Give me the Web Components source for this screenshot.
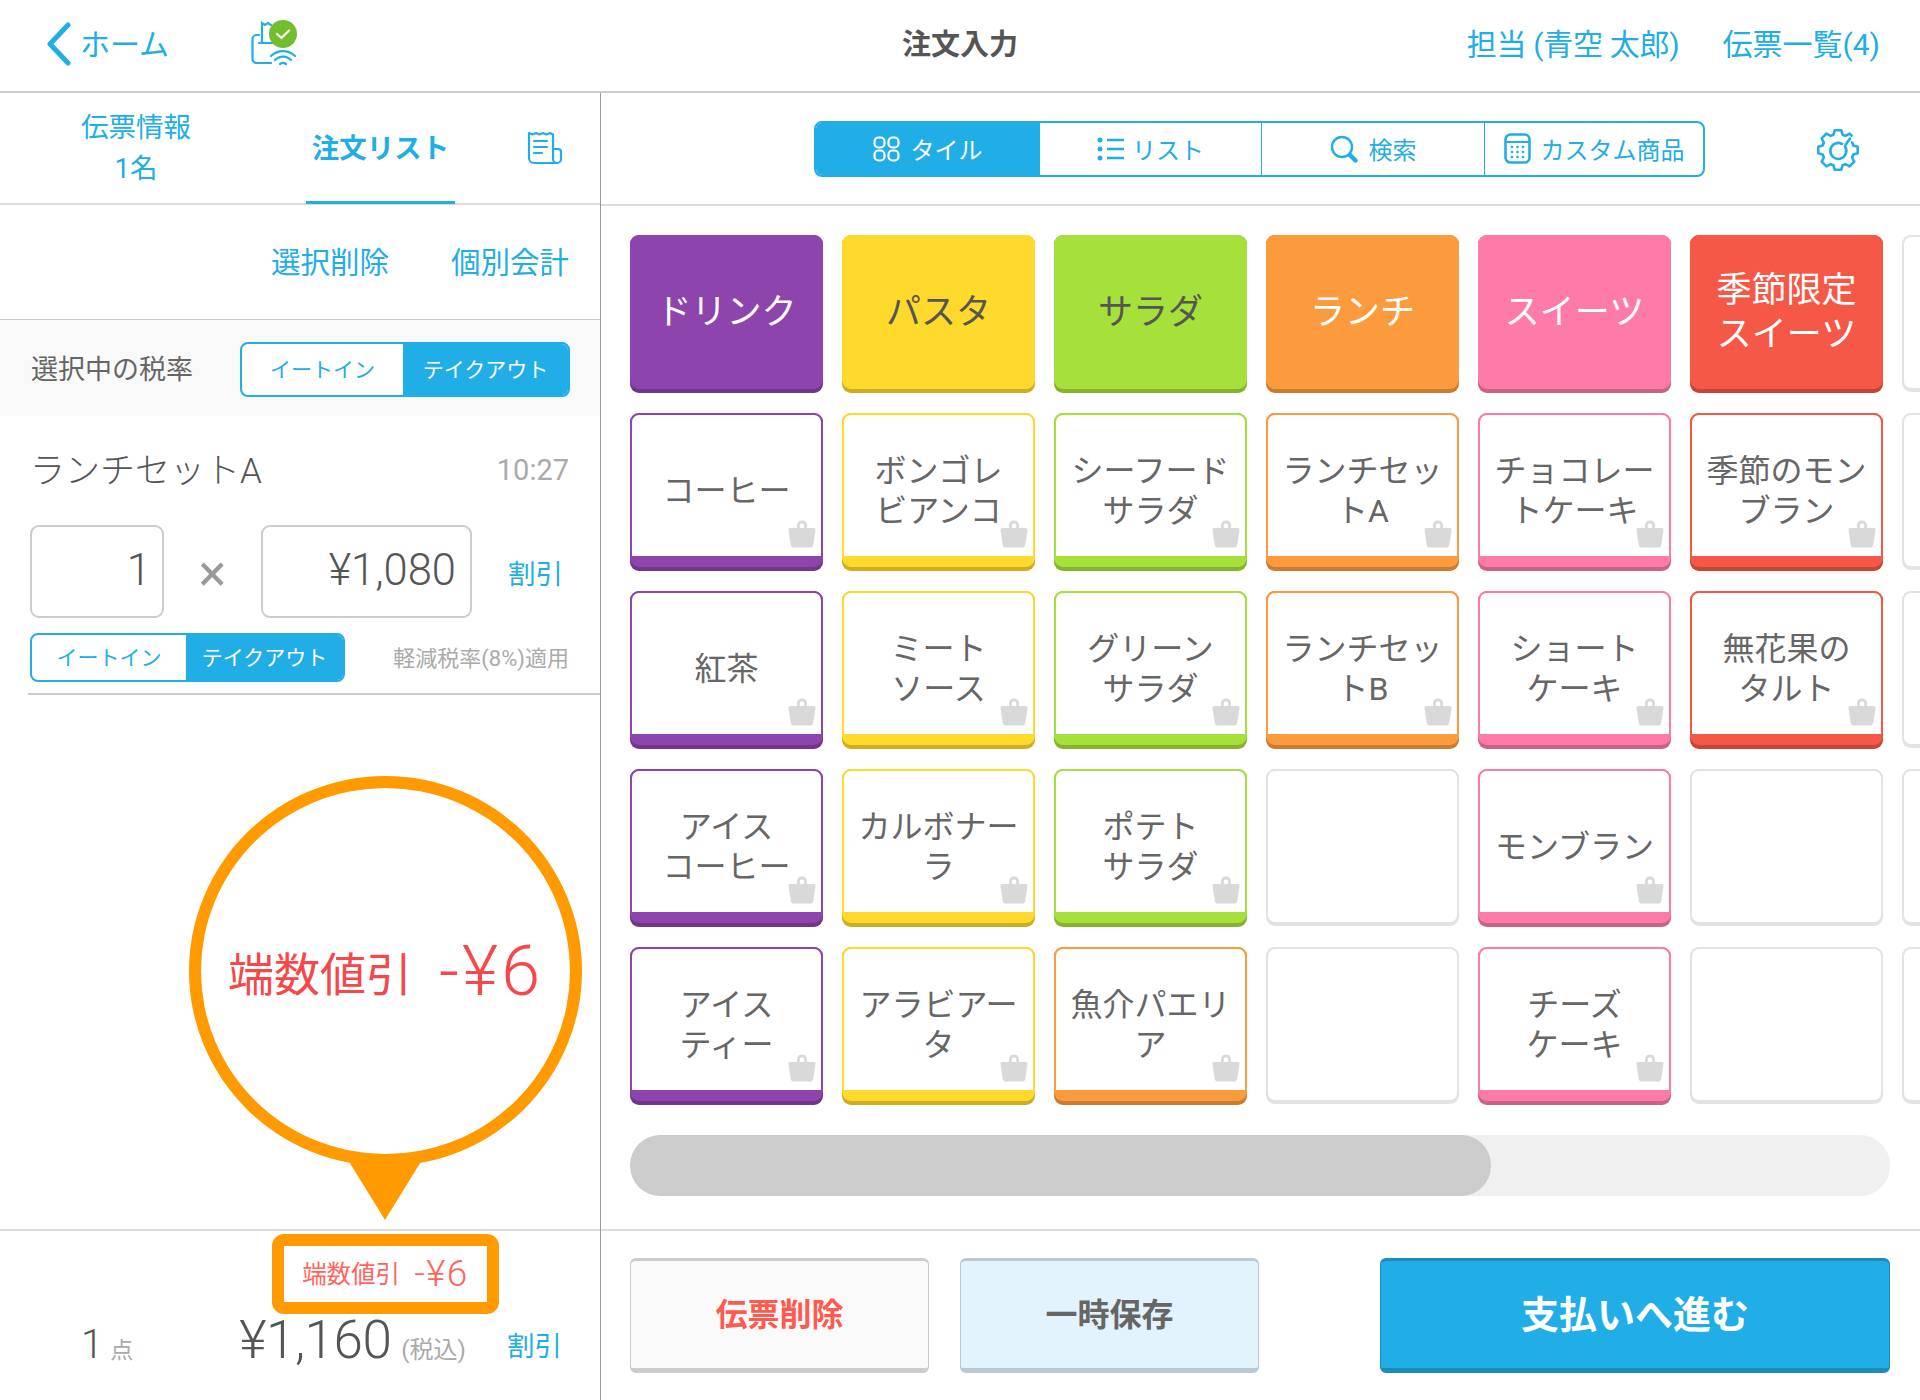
<!DOCTYPE html>
<html lang="ja">
<head>
<meta charset="utf-8">
<title>注文入力</title>
<style>
  :root {
    --blue: #21ade5;
    --ink: #555;
    --muted: #aaa;
    --line: #ddd;
  }
  html, body { margin: 0; background: #fff; }
  body {
    width: 1920px;
    height: 1400px;
    overflow: hidden;
    font-family: Roboto, "Noto Sans CJK JP", sans-serif;
    font-weight: 300;
    color: var(--ink);
  }
</style>
</head>
<body>
<pos-app></pos-app>

<script>
const BAG = `<svg viewBox="0 0 28 28" width="28" height="28"><path fill="#d9d9d9" d="M9 8V5a5 4.600 0 0 1 10 0v3h6.500a2 2 0 0 1 2 2.300l-2.200 14.500a3 3 0 0 1-3 2.700H5.700a3 3 0 0 1-3-2.700L.5 10.300a2 2 0 0 1 2-2.300zM11.800 8h4.400V5.200a1.600 1.600 0 0 0-1.600-1.600h-1.200a1.600 1.600 0 0 0-1.600 1.600z"/></svg>`;

function gearPoints(cx, cy, outer, inner, teeth) {
  const pts = [];
  const step = Math.PI * 2 / teeth;
  for (let i = 0; i < teeth; i++) {
    const a = i * step - Math.PI / 2;
    [[-0.3, inner], [-0.17, outer], [0.17, outer], [0.3, inner]].forEach(([f, r]) => {
      pts.push((cx + r * Math.cos(a + f * step * 1.25)).toFixed(1) + "," + (cy + r * Math.sin(a + f * step * 1.25)).toFixed(1));
    });
  }
  return pts.join(" ");
}

class PosHeader extends HTMLElement {
  constructor() {
    super();
    this.attachShadow({ mode: "open" });
  }

  connectedCallback() {
    this.shadowRoot.innerHTML = `
    <style>
      :host {
        display: grid;
        grid-template-columns: 1fr auto 1fr;
        align-items: center;
        height: 91px;
        border-bottom: 2px solid #ccc;
        padding: 0 40px;
      }
      .left, .right { display: flex; align-items: center; }
      .right { justify-content: flex-end; gap: 43px; }
      .back { display: flex; align-items: center; gap: 9px; margin-left: 7px; color: var(--blue); font-size: 30px; font-weight: 400; }
      .back svg { margin-bottom: 3px; }
      .back span { margin-bottom: 7px; }
      .status { display: block; margin: 0 0 6px 71px; }
      h1 { margin: 0 0 7px; font-size: 29px; font-weight: 700; color: var(--ink); }
      a { color: var(--blue); font-size: 30px; font-weight: 400; margin-bottom: 7px; }
      a.who { letter-spacing: -0.3px; }
    </style>
    <div class="left">
      <div class="back">
        <svg width="24" height="44" viewBox="0 0 24 44"><path d="M21 3 3 22l18 19" fill="none" stroke="#21ade5" stroke-width="5" stroke-linecap="round" stroke-linejoin="round"/></svg>
        <span>ホーム</span>
      </div>
      <svg class="status" width="70" height="65" viewBox="0 0 70 65">
        <g fill="none" stroke="#21ade5" stroke-width="2.200" stroke-linecap="round">
          <path d="M19 25h-2.500a4 4 0 0 0-4 4v20a4 4 0 0 0 4 4H31"/>
          <path d="M22 33V13l3 2 3-2 3 2M19 33h14"/>
          <path d="M31 46a17 17 0 0 1 24 0M35 50a11 11 0 0 1 16 0M40 54a5 5 0 0 1 6 0"/>
        </g>
        <circle cx="43" cy="24" r="14" fill="#71bf2e"/>
        <path d="M37 24l4.500 4 7.500-7.500" fill="none" stroke="#fff" stroke-width="2.200" stroke-linecap="round" stroke-linejoin="round"/>
      </svg>
    </div>
    <h1>注文入力</h1>
    <div class="right">
      <a class="who">担当 (青空 太郎)</a>
      <a>伝票一覧(4)</a>
    </div>`;
  }
}

class SegControl extends HTMLElement {
  constructor() {
    super();
    this.attachShadow({ mode: "open" });
  }

  connectedCallback() {
    this.shadowRoot.innerHTML = `
    <style>
      :host {
        display: inline-flex;
        box-sizing: border-box;
        border: 2px solid var(--blue);
        border-radius: 8px;
        overflow: hidden;
        background: #fff;
      }
    </style>
    <slot></slot>`;
  }
}

class SegItem extends HTMLElement {
  constructor() {
    super();
    this.attachShadow({ mode: "open" });
  }

  connectedCallback() {
    this.shadowRoot.innerHTML = `
    <style>
      :host {
        display: flex;
        align-items: center;
        justify-content: center;
        box-sizing: border-box;
        padding-bottom: var(--seg-lift, 0);
        color: var(--blue);
        font-size: var(--seg-font, 21px);
        font-weight: 400;
      }
      :host([active]) { background: var(--blue); color: #fff; }
      :host([divided]) { border-left: 1.500px solid var(--blue); }
      .inner { display: flex; align-items: center; gap: var(--seg-gap, 0); }
    </style>
    <div class="inner"><slot name="icon"></slot><slot></slot></div>`;
  }
}

class OrderPanel extends HTMLElement {
  constructor() {
    super();
    this.attachShadow({ mode: "open" });
  }

  static get styles() {
    return `
      :host {
        display: flex;
        flex-direction: column;
        position: relative;
        box-sizing: border-box;
        width: 601px;
        border-right: 1px solid #999;
        --seg-lift: 4px;
      }
      .tabs {
        display: grid;
        grid-template-columns: 272px 149px 1fr;
        column-gap: 34px;
        height: 112px;
        box-sizing: border-box;
        border-bottom: 2px solid var(--line);
        color: var(--blue);
        font-size: 27.500px;
        font-weight: 400;
      }
      .tab { display: flex; align-items: center; justify-content: center; text-align: center; line-height: 41px; }
      .tab.current { font-weight: 700; border-bottom: 3px solid var(--blue); margin-bottom: -1px; padding-top: 2px; }
      .actions {
        display: flex;
        justify-content: flex-end;
        align-items: center;
        gap: 62px;
        height: 115px;
        box-sizing: border-box;
        border-bottom: 1px solid #ccc;
        padding: 0 31px 4px 0;
        color: var(--blue);
        font-size: 29.500px;
        font-weight: 400;
      }
      .rate {
        display: flex;
        justify-content: space-between;
        align-items: center;
        height: 96px;
        box-sizing: border-box;
        padding: 3px 30px 0 31px;
        background: #f9f9f9;
        font-size: 27px;
        font-weight: 400;
        color: #666;
      }
      .rate > span { margin-bottom: 4px; }
      .rate seg-control { width: 330px; height: 55px; }
      .line-item {
        margin-left: 28px;
        padding: 0 31px 11px 2px;
        border-bottom: 2px solid #ccc;
      }
      .name { display: flex; justify-content: space-between; align-items: center; height: 107px; font-size: 35px; }
      .name span { margin-bottom: 5px; }
      .name time { font-size: 29px; color: var(--muted); font-weight: 400; }
      .amounts { display: flex; align-items: center; margin-top: 2px; }
      .field {
        box-sizing: border-box;
        height: 93px;
        border: 2px solid #ccc;
        border-radius: 9px;
        display: flex;
        align-items: center;
        justify-content: flex-end;
        padding: 0 14px 3px 0;
        font-size: 43.500px;
      }
      .qty { width: 134px; padding-right: 11px; }
      .price { width: 211px; }
      .times { width: 97px; text-align: center; font-size: 52px; line-height: 60px; color: #999; font-weight: 400; padding-top: 4px; }
      .link { color: var(--blue); font-size: 27.500px; font-weight: 400; margin-left: 36px; }
      .tax { display: flex; justify-content: space-between; align-items: center; margin-top: 15px; }
      .tax seg-control { width: 315px; height: 49px; }
      .tax small { font-size: 22px; color: var(--muted); font-weight: 400; margin-bottom: 4px; }
      .spacer { flex: 1; }
      .totals {
        height: 169px;
        border-top: 2px solid var(--line);
        padding: 0 38px 0 81px;
      }
      .totals > div { display: flex; align-items: baseline; margin-top: 78px; white-space: nowrap; }
      .count { font-size: 40px; }
      .count small { font-size: 23px; margin-left: 7px; color: var(--muted); font-weight: 400; }
      .sum { font-size: 53px; margin-left: 106px; letter-spacing: -0.500px; }
      .sum small { font-size: 24px; color: var(--muted); margin-left: 10px; letter-spacing: 0; font-weight: 400; }
      .totals .link { margin: 15px 0 0 auto; align-self: flex-start; }
      discount-badge { position: absolute; left: 272px; top: 1141px; }
      discount-callout { position: absolute; left: 189px; top: 683px; }
    `;
  }

  connectedCallback() {
    this.shadowRoot.innerHTML = `
    <style>${OrderPanel.styles}</style>
    <div class="tabs">
      <div class="tab">伝票情報<br>1名</div>
      <div class="tab current">注文リスト</div>
      <div class="tab">
        <svg width="36" height="34" viewBox="0 0 36 34"><g fill="none" stroke="#21ade5" stroke-width="2.200" stroke-linecap="round" stroke-linejoin="round">
          <path d="M2 2l3.500 1.500L9 2l3.500 1.500L16 2l3.500 1.500L23 2l3 1.500V28a4 4 0 0 0 4 4H7a5 5 0 0 1-5-5z"/>
          <path d="M26 18h5a3 3 0 0 1 3 3v7a4 4 0 0 1-4 4M7 10h13M7 16h13M7 22h8"/>
        </g></svg>
      </div>
    </div>
    <div class="actions"><span>選択削除</span><span>個別会計</span></div>
    <div class="rate">
      <span>選択中の税率</span>
      <seg-control>
        <seg-item style="width:161px">イートイン</seg-item>
        <seg-item style="flex:1" active>テイクアウト</seg-item>
      </seg-control>
    </div>
    <div class="line-item">
      <div class="name"><span>ランチセットA</span><time>10:27</time></div>
      <div class="amounts">
        <div class="field qty">1</div>
        <div class="times">×</div>
        <div class="field price">¥1,080</div>
        <div class="link">割引</div>
      </div>
      <div class="tax">
        <seg-control>
          <seg-item style="width:154px">イートイン</seg-item>
          <seg-item style="flex:1" active>テイクアウト</seg-item>
        </seg-control>
        <small>軽減税率(8%)適用</small>
      </div>
    </div>
    <div class="spacer"></div>
    <div class="totals"><div>
      <span class="count">1<small>点</small></span>
      <span class="sum">¥1,160<small>(税込)</small></span>
      <span class="link">割引</span>
    </div></div>
    <discount-callout></discount-callout>
    <discount-badge></discount-badge>`;
  }
}

class DiscountCallout extends HTMLElement {
  constructor() {
    super();
    this.attachShadow({ mode: "open" });
  }

  connectedCallback() {
    this.shadowRoot.innerHTML = `
    <style>
      :host {
        display: flex;
        align-items: center;
        justify-content: center;
        gap: 27px;
        box-sizing: border-box;
        width: 393px;
        height: 390px;
        border: 12px solid #ff9a00;
        border-radius: 50%;
        background: #fff;
        color: #f4484a;
        font-weight: 400;
      }
      :host::after {
        content: "";
        position: absolute;
        left: 147px;
        top: 372px;
        width: 74px;
        height: 60px;
        background: #ff9a00;
        clip-path: polygon(0 0, 100% 0, 50% 100%);
      }
      .label { font-size: 46px; }
      .amount { font-size: 70px; line-height: 80px; font-weight: 300; letter-spacing: 3px; }
    </style>
    <span class="label">端数値引</span><span class="amount">-¥6</span>`;
  }
}

class DiscountBadge extends HTMLElement {
  constructor() {
    super();
    this.attachShadow({ mode: "open" });
  }

  connectedCallback() {
    this.shadowRoot.innerHTML = `
    <style>
      :host {
        display: flex;
        align-items: center;
        justify-content: center;
        gap: 14px;
        box-sizing: border-box;
        width: 227px;
        height: 80px;
        border: 12px solid #ff9a00;
        border-radius: 12px;
        background: #fff;
        color: #ff6460;
        font-weight: 400;
      }
      .label { font-size: 24.500px; margin-bottom: 4px; }
      .amount { font-size: 37px; line-height: 44px; font-weight: 300; letter-spacing: 1.500px; }
    </style>
    <span class="label">端数値引</span><span class="amount">-¥6</span>`;
  }
}

const PALETTE = {
  purple: { c: "#8e44ad", d: "#6f3689", t: "#fff" },
  yellow: { c: "#ffd92b", d: "#cdae22", t: "#555" },
  green: { c: "#a6e03a", d: "#85b32e", t: "#555" },
  orange: { c: "#fb9b3e", d: "#c97c32", t: "#fff" },
  pink: { c: "#fd7aa9", d: "#ca6287", t: "#fff" },
  red: { c: "#f55847", d: "#c44639", t: "#fff" },
};

class MenuTile extends HTMLElement {
  constructor() {
    super();
    this.attachShadow({ mode: "open" });
  }

  static get styles() {
    return `
      :host {
        display: block;
        position: relative;
        height: 158px;
        border-radius: 9px;
        background: var(--dark, #ddd);
        text-align: center;
      }
      .face {
        box-sizing: border-box;
        height: 154px;
        border: 2px solid var(--base, #e3e3e3);
        border-radius: 9px;
        background: #fff;
        display: flex;
        align-items: center;
        justify-content: center;
        font-size: 32px;
        line-height: 40px;
        font-weight: 400;
        color: #666;
      }
      .label { white-space: pre-line; }
      :host([kind="item"]) .face { border-bottom-width: 11px; padding-top: 11px; }
      :host([kind="category"]) .face {
        background: var(--base);
        color: var(--text);
        font-size: 35px;
        line-height: 44px;
        padding-top: 1px;
      }
      :host([kind="empty"]) { background: #e3e3e3; height: 157px; }
      :host([kind="empty"]) .face { height: 155px; }
      .bag { position: absolute; right: 7px; bottom: 23px; height: 28px; }
    `;
  }

  connectedCallback() {
    const kind = this.getAttribute("kind") || "empty";
    const tone = PALETTE[this.getAttribute("tone")];
    if (tone) {
      this.style.setProperty("--base", tone.c);
      this.style.setProperty("--dark", tone.d);
      this.style.setProperty("--text", tone.t);
    }
    this.shadowRoot.innerHTML = `
    <style>${MenuTile.styles}</style>
    <div class="face"><div class="label"><slot></slot></div></div>
    ${kind === "item" ? `<div class="bag">${BAG}</div>` : ""}`;
  }
}

const TONES = ["purple", "yellow", "green", "orange", "pink", "red"];
const MENU = [
  ["ドリンク", "パスタ", "サラダ", "ランチ", "スイーツ", "季節限定\nスイーツ"],
  ["コーヒー", "ボンゴレ\nビアンコ", "シーフード\nサラダ", "ランチセッ\nトA", "チョコレー\nトケーキ", "季節のモン\nブラン"],
  ["紅茶", "ミート\nソース", "グリーン\nサラダ", "ランチセッ\nトB", "ショート\nケーキ", "無花果の\nタルト"],
  ["アイス\nコーヒー", "カルボナー\nラ", "ポテト\nサラダ", "", "モンブラン", ""],
  ["アイス\nティー", "アラビアー\nタ", "魚介パエリ\nア", "", "チーズ\nケーキ", ""],
];

class MenuGrid extends HTMLElement {
  constructor() {
    super();
    this.attachShadow({ mode: "open" });
  }

  connectedCallback() {
    const style = document.createElement("style");
    style.textContent = `
      :host {
        display: grid;
        grid-template-columns: repeat(7, 193px);
        grid-auto-rows: 158px;
        column-gap: 19px;
        row-gap: 20px;
      }
    `;
    this.shadowRoot.append(style);
    MENU.forEach((row, r) => {
      row.forEach((label, i) => {
        const tile = document.createElement("menu-tile");
        tile.setAttribute("kind", !label ? "empty" : r === 0 ? "category" : "item");
        if (label) {
          // 魚介パエリア sits in the orange group although it is in the third column
          tile.setAttribute("tone", label.startsWith("魚介") ? "orange" : TONES[i]);
          tile.textContent = label;
        }
        this.shadowRoot.append(tile);
      });
      const spare = document.createElement("menu-tile");
      spare.setAttribute("kind", "empty");
      this.shadowRoot.append(spare);
    });
  }
}

class ActionButton extends HTMLElement {
  constructor() {
    super();
    this.attachShadow({ mode: "open" });
  }

  connectedCallback() {
    this.shadowRoot.innerHTML = `
    <style>
      :host {
        display: flex;
        align-items: center;
        justify-content: center;
        box-sizing: border-box;
        height: 115px;
        border: 1px solid #ccc;
        border-top-width: 3px;
        border-bottom-width: 5px;
        border-radius: 6px;
        background: #fafafa;
        font-size: 32px;
        font-weight: 700;
        color: #ff5a50;
        padding-bottom: 6px;
      }
      :host([tone="hold"]) { background: #e3f3fd; border-color: #b9c9d4; color: #666; }
      :host([tone="pay"]) {
        background: var(--blue);
        border-color: #1e8bbb;
        color: #fff;
        font-size: 38px;
      }
    </style>
    <slot></slot>`;
  }
}

class ProductPanel extends HTMLElement {
  constructor() {
    super();
    this.attachShadow({ mode: "open" });
  }

  static get styles() {
    return `
      :host { display: flex; flex-direction: column; flex: 1; min-width: 0; overflow: hidden; }
      .toolbar {
        display: flex;
        align-items: center;
        height: 113px;
        box-sizing: border-box;
        border-bottom: 2px solid var(--line);
        padding: 0 0 0 213px;
      }
      .toolbar seg-control { width: 891px; height: 56px; --seg-font: 24px; --seg-gap: 11px; }
      .toolbar svg { display: block; }
      .toolbar .gear { margin-left: 100px; margin-bottom: 1px; }
      menu-grid { margin: 29px 0 0 29px; }
      .scroll {
        margin: 30px 30px 0 29px;
        height: 61px;
        border-radius: 30px;
        background: #f0f0f0;
        overflow: hidden;
      }
      .scroll div { width: 861px; height: 100%; background: #ccc; border-radius: 30px; }
      .bottom {
        display: flex;
        margin-top: 33px;
        border-top: 2px solid var(--line);
        padding: 27px 30px 0 29px;
      }
      .bottom action-button { width: 299px; }
      .bottom action-button + action-button { margin-left: 31px; }
      .bottom action-button[tone="pay"] { width: 510px; margin-left: 121px; }
    `;
  }

  connectedCallback() {
    this.shadowRoot.innerHTML = `
    <style>${ProductPanel.styles}</style>
    <div class="toolbar">
      <seg-control>
        <seg-item style="width:223px" active>
          <svg slot="icon" width="27" height="26" viewBox="0 0 27 26"><g fill="none" stroke="#fff" stroke-width="2.200"><rect x="1.500" y="1.500" width="10" height="10" rx="4"/><rect x="15.500" y="1.500" width="10" height="10" rx="4"/><rect x="1.500" y="14.500" width="10" height="10" rx="4"/><rect x="15.500" y="14.500" width="10" height="10" rx="4"/></g></svg>
          タイル
        </seg-item>
        <seg-item style="width:222px" divided>
          <svg slot="icon" width="28" height="26" viewBox="0 0 28 26" style="margin-right:-4px"><g fill="#21ade5"><circle cx="3" cy="4" r="2.500"/><circle cx="3" cy="13" r="2.500"/><circle cx="3" cy="22" r="2.500"/></g><path d="M10 4h17M10 13h17M10 22h17" stroke="#21ade5" stroke-width="2.600"/></svg>
          リスト
        </seg-item>
        <seg-item style="width:223px" divided>
          <svg slot="icon" width="28" height="28" viewBox="0 0 28 28"><circle cx="12" cy="12" r="10" fill="none" stroke="#21ade5" stroke-width="2.400"/><path d="M20 20l5.500 5.500" stroke="#21ade5" stroke-width="4.500" stroke-linecap="round"/></svg>
          検索
        </seg-item>
        <seg-item style="flex:1" divided>
          <svg slot="icon" width="27" height="31" viewBox="0 0 27 31" style="margin-right:-1px"><rect x="1.500" y="1.500" width="24" height="28" rx="5" fill="none" stroke="#21ade5" stroke-width="2.600"/><path d="M2 9h23" stroke="#21ade5" stroke-width="2.200"/><g fill="#21ade5"><circle cx="8" cy="14" r="1.300"/><circle cx="13.500" cy="14" r="1.300"/><circle cx="19" cy="14" r="1.300"/><circle cx="8" cy="19" r="1.300"/><circle cx="13.500" cy="19" r="1.300"/><circle cx="19" cy="19" r="1.300"/><circle cx="8" cy="24" r="1.300"/><circle cx="13.500" cy="24" r="1.300"/><circle cx="19" cy="24" r="1.300"/></g></svg>
          カスタム商品
        </seg-item>
      </seg-control>
      <svg class="gear" width="70" height="60" viewBox="0 0 70 60">
        <polygon points="${gearPoints(33, 32, 20, 16, 8)}" fill="none" stroke="#21ade5" stroke-width="2.600" stroke-linejoin="round"/>
        <path d="M46.500 19.500l4 3" stroke="#fff" stroke-width="5"/>
        <path d="M40 28.500a8 8 0 1 1-3-2.700M40.500 27l4.500-6.500" fill="none" stroke="#21ade5" stroke-width="2.600" stroke-linecap="round"/>
      </svg>
    </div>
    <menu-grid></menu-grid>
    <div class="scroll"><div></div></div>
    <div class="bottom">
      <action-button>伝票削除</action-button>
      <action-button tone="hold">一時保存</action-button>
      <action-button tone="pay">支払いへ進む</action-button>
    </div>`;
  }
}

class PosApp extends HTMLElement {
  constructor() {
    super();
    this.attachShadow({ mode: "open" });
  }

  connectedCallback() {
    this.shadowRoot.innerHTML = `
    <style>
      :host { display: flex; flex-direction: column; width: 1920px; height: 1400px; overflow: hidden; }
      main { display: flex; flex: 1; min-height: 0; }
    </style>
    <pos-header></pos-header>
    <main>
      <order-panel></order-panel>
      <product-panel></product-panel>
    </main>`;
  }
}

customElements.define("pos-header", PosHeader);
customElements.define("seg-control", SegControl);
customElements.define("seg-item", SegItem);
customElements.define("order-panel", OrderPanel);
customElements.define("discount-callout", DiscountCallout);
customElements.define("discount-badge", DiscountBadge);
customElements.define("menu-tile", MenuTile);
customElements.define("menu-grid", MenuGrid);
customElements.define("action-button", ActionButton);
customElements.define("product-panel", ProductPanel);
customElements.define("pos-app", PosApp);
</script>
</body>
</html>
